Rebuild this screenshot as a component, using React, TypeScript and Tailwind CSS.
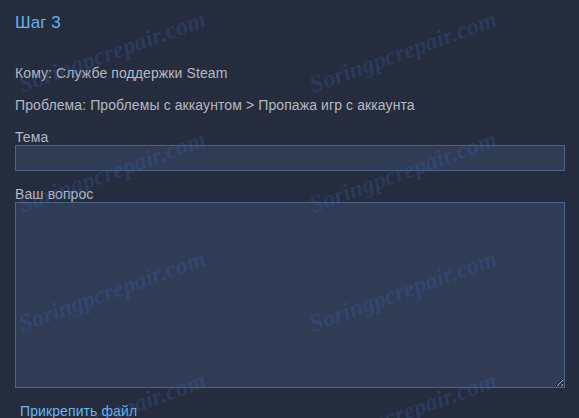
import React from 'react';

const watermarks = [
  { top: 27, left: 22 },
  { top: 27, left: 313 },
  { top: 147, left: 22 },
  { top: 147, left: 313 },
  { top: 266, left: 22 },
  { top: 266, left: 313 },
  { top: 388, left: 22 },
  { top: 388, left: 313 },
];

// faint diagonal site watermark that sits over the form
const Watermark: React.FC<{ top: number; left: number }> = ({ top, left }) => (
  <div
    className="pointer-events-none absolute origin-bottom-left -rotate-[20deg] whitespace-nowrap font-['Liberation_Serif',serif] text-[24px] font-bold italic leading-4 text-[#3a62b0]/30"
    style={{ top: top + 50, left }}
    aria-hidden
  >
    Soringpcrepair.com
  </div>
);

export default function App() {
  return (
    <div className="relative min-h-screen overflow-hidden bg-[#252c3d] pl-[15px] pr-[14px] pt-[13px] font-['Liberation_Sans',Arial,sans-serif] text-[14px] leading-4 tracking-[0.1px] text-[#b5b9c1]">
      <h2 className="text-[17px] leading-5 text-[#6cb2e6]">Шаг 3</h2>

      <p className="mt-[32px]">Кому: Службе поддержки Steam</p>
      <p className="mt-4">Проблема: Проблемы с аккаунтом &gt; Пропажа игр с аккаунта</p>

      <label className="mt-4 block">Тема</label>
      <input
        type="text"
        className="block h-[26px] w-full border border-[#4a658c] bg-[#303c56] px-1 text-[#c6d4df] outline-none"
      />

      <label className="mt-[15px] block">Ваш вопрос</label>
      <textarea className="block h-[186px] w-full border border-[#4a658c] bg-[#303c56] p-1 text-[#c6d4df] outline-none" />

      <a href="#" className="mt-[15px] block pl-[5px] text-[#67b7f0]">
        Прикрепить файл
      </a>

      {watermarks.map((w, i) => (
        <Watermark key={i} top={w.top} left={w.left} />
      ))}
    </div>
  );
}
